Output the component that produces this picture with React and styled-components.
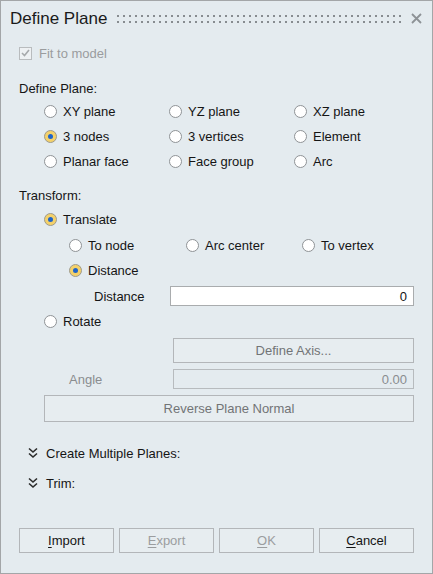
import React from 'react';
import styled, { createGlobalStyle } from 'styled-components';

const GlobalStyle = createGlobalStyle`
    html, body {
        margin: 0;
        padding: 0;
        background: #e4ebef;
    }
    * {
        box-sizing: border-box;
    }
`;

const Dialog = styled.div`
    width: 433px;
    height: 574px;
    border: 1px solid #a3a6a8;
    background: #e4ebef;
    font-family: "Liberation Sans", Arial, sans-serif;
    font-size: 13px;
    color: #151515;
    display: flex;
    flex-direction: column;
`;

const TitleBar = styled.div`
    height: 36px;
    display: flex;
    align-items: center;
    padding: 0 9px 0 9px;
    h1 {
        margin: 0;
        font-size: 17px;
        font-weight: normal;
        color: #1a1a1a;
        white-space: nowrap;
    }
`;

const Grip = styled.svg`
    flex: 1;
    height: 8px;
    margin: 0 0 0 10px;
`;

const CloseButton = styled.svg`
    width: 11px;
    height: 11px;
    margin-left: 8px;
    margin-right: 1px;
    margin-bottom: 2px;
`;

const Body = styled.div`
    flex: 1;
    padding: 0 18px 0 18px;
    display: flex;
    flex-direction: column;
`;

const CheckRow = styled.label`
    display: flex;
    align-items: center;
    height: 20px;
    margin-top: 6px;
    color: #9a9c9e;
`;

const CheckBox = styled.span`
    width: 13px;
    height: 13px;
    border: 1px solid #b9bcbe;
    background: #eef1f3;
    margin-right: 7px;
    display: flex;
    align-items: center;
    justify-content: center;
`;

const SectionLabel = styled.div`
    height: 20px;
    display: flex;
    align-items: center;
    margin-top: ${p => p.$top}px;
`;

const RadioGrid = styled.div`
    display: grid;
    grid-template-columns: ${p => p.$cols};
    padding-left: ${p => p.$indent}px;
    margin-top: ${p => p.$top || 0}px;
    grid-auto-rows: 25px;
`;

const RadioRow = styled.label`
    display: flex;
    align-items: center;
    height: 25px;
    padding-left: ${p => p.$indent || 0}px;
    margin-top: ${p => p.$top || 0}px;
    white-space: nowrap;
`;

const Circle = styled.span`
    width: 13px;
    height: 13px;
    border-radius: 50%;
    border: 1px solid ${p => (p.$on ? '#9d9a8e' : '#8f9396')};
    background: ${p => (p.$on ? '#f4d16a' : '#ffffff')};
    margin-right: 6px;
    display: flex;
    align-items: center;
    justify-content: center;
    flex-shrink: 0;
    &::after {
        content: '';
        display: ${p => (p.$on ? 'block' : 'none')};
        width: 5px;
        height: 5px;
        border-radius: 50%;
        background: #1f64c8;
    }
`;

const FieldRow = styled.div`
    display: flex;
    align-items: center;
    height: ${p => p.$h}px;
    margin-top: ${p => p.$top || 0}px;
`;

const FieldLabel = styled.span`
    width: ${p => p.$w}px;
    padding-left: ${p => p.$pad}px;
    color: ${p => (p.$disabled ? '#8a8d8f' : '#151515')};
    flex-shrink: 0;
`;

const TextInput = styled.div`
    flex: 1;
    height: 100%;
    border: 1px solid ${p => (p.$disabled ? '#b7bbbe' : '#a9acae')};
    background: ${p => (p.$disabled ? '#e4ebef' : '#ffffff')};
    color: ${p => (p.$disabled ? '#8a8d8f' : '#151515')};
    display: flex;
    align-items: center;
    justify-content: flex-end;
    padding-right: 6px;
`;

const buttonText = {
    normal: '#151515',
    dim: '#727476',
    muted: '#9b9d9f',
};

const Button = styled.div`
    height: ${p => p.$h || 25}px;
    border: 1px solid #b3b6b9;
    background: #e7edf0;
    color: ${p => buttonText[p.$tone || 'normal']};
    display: flex;
    align-items: center;
    justify-content: center;
    white-space: nowrap;
    flex: ${p => (p.$stretch ? 1 : 'none')};
    margin-left: ${p => p.$left || 0}px;
    u {
        text-decoration: underline;
        text-underline-offset: 2px;
    }
`;

const Expander = styled.div`
    display: flex;
    align-items: center;
    height: 20px;
    margin-top: ${p => p.$top}px;
    svg {
        margin-left: 9px;
        margin-right: 8px;
    }
`;

const Footer = styled.div`
    display: grid;
    grid-template-columns: repeat(4, 1fr);
    gap: 5px;
    margin-top: auto;
    margin-bottom: 20px;
`;

const Radio = ({ on, children, indent, top }) => (
    <RadioRow $indent={indent} $top={top}>
        <Circle $on={on} />
        {children}
    </RadioRow>
);

const Chevrons = () => (
    <svg width="10" height="12" viewBox="0 0 10 12">
        <path d="M1 1.5 L5 5 L9 1.5" fill="none" stroke="#2a2a2a" strokeWidth="1.6" />
        <path d="M1 6.5 L5 10 L9 6.5" fill="none" stroke="#2a2a2a" strokeWidth="1.6" />
    </svg>
);

const planeOptions = [
    ['XY plane', false], ['YZ plane', false], ['XZ plane', false],
    ['3 nodes', true], ['3 vertices', false], ['Element', false],
    ['Planar face', false], ['Face group', false], ['Arc', false],
];

const App = () => {
    return (
        <Dialog>
            <GlobalStyle />
            <TitleBar>
                <h1>Define Plane</h1>
                <Grip preserveAspectRatio="none">
                    <defs>
                        <pattern id="dots" width="6" height="6" patternUnits="userSpaceOnUse">
                            <rect x="0" y="0" width="2" height="2" fill="#878c90" />
                        </pattern>
                    </defs>
                    <rect x="0" y="0" width="100%" height="8" fill="url(#dots)" />
                </Grip>
                <CloseButton viewBox="0 0 11 11">
                    <path d="M1 1 L10 10 M10 1 L1 10" stroke="#8d9296" strokeWidth="1.8" />
                </CloseButton>
            </TitleBar>
            <Body>
                <CheckRow>
                    <CheckBox>
                        <svg width="9" height="8" viewBox="0 0 9 8">
                            <path d="M1 4 L3.5 6.5 L8 1" fill="none" stroke="#a6a9ab" strokeWidth="1.6" />
                        </svg>
                    </CheckBox>
                    Fit to model
                </CheckRow>

                <SectionLabel $top={15}>Define Plane:</SectionLabel>
                <RadioGrid $cols="125px 125px 125px" $indent={25} $top={1}>
                    {planeOptions.map(([label, on]) => (
                        <Radio key={label} on={on}>{label}</Radio>
                    ))}
                </RadioGrid>

                <SectionLabel $top={11}>Transform:</SectionLabel>
                <Radio on indent={25} top={2}>Translate</Radio>
                <RadioGrid $cols="117px 116px 110px" $indent={50} $top={1}>
                    <Radio>To node</Radio>
                    <Radio>Arc center</Radio>
                    <Radio>To vertex</Radio>
                    <Radio on>Distance</Radio>
                </RadioGrid>
                <FieldRow $h={20} $top={3}>
                    <FieldLabel $w={151} $pad={75}>Distance</FieldLabel>
                    <TextInput>0</TextInput>
                </FieldRow>
                <Radio indent={25} top={3}>Rotate</Radio>
                <FieldRow $h={25} $top={4}>
                    <Button $stretch $tone="dim" $left={154}>Define Axis...</Button>
                </FieldRow>
                <FieldRow $h={20} $top={6}>
                    <FieldLabel $w={154} $pad={50} $disabled>Angle</FieldLabel>
                    <TextInput $disabled>0.00</TextInput>
                </FieldRow>
                <FieldRow $h={27} $top={6}>
                    <Button $stretch $tone="dim" $left={25} $h={27}>Reverse Plane Normal</Button>
                </FieldRow>

                <Expander $top={21}>
                    <Chevrons />
                    Create Multiple Planes:
                </Expander>
                <Expander $top={10}>
                    <Chevrons />
                    Trim:
                </Expander>

                <Footer>
                    <Button><span><u>I</u>mport</span></Button>
                    <Button $tone="muted"><span><u>E</u>xport</span></Button>
                    <Button $tone="muted"><span><u>O</u>K</span></Button>
                    <Button><span><u>C</u>ancel</span></Button>
                </Footer>
            </Body>
        </Dialog>
    );
};

export default App;
